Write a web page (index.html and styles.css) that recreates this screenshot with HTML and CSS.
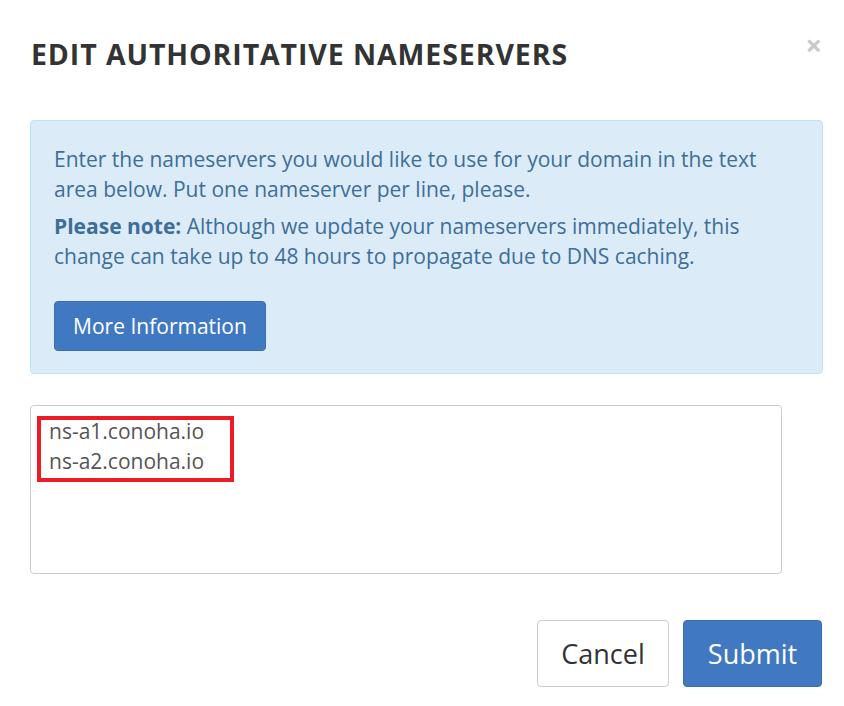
FILE: index.html
```html
<!DOCTYPE html>
<html>
<head>
<meta charset="utf-8">
<link rel="stylesheet" href="styles.css">
</head>
<body>
<div class="modal">
  <div class="modal-header">
    <h1 class="title">EDIT AUTHORITATIVE NAMESERVERS</h1>
    <span class="close">&times;</span>
  </div>
  <div class="alert">
    <p>Enter the nameservers you would like to use for your domain in the text area below. Put one nameserver per line, please.</p>
    <p><strong>Please note:</strong> Although we update your nameservers immediately, this change can take up to 48 hours to propagate due to DNS caching.</p>
    <a class="btn btn-primary btn-info">More Information</a>
  </div>
  <div class="textarea-wrap">
    <div class="textarea">ns-a1.conoha.io<br>ns-a2.conoha.io</div>
    <div class="highlight"></div>
  </div>
  <div class="footer">
    <a class="btn btn-default btn-lg">Cancel</a>
    <a class="btn btn-primary btn-lg">Submit</a>
  </div>
</div>
</body>
</html>
```
FILE: styles.css
```css
html, body {
  margin: 0;
  padding: 0;
  background: #fff;
}
body {
  font-family: "Open Sans", "Liberation Sans", sans-serif;
  color: #333;
}
.modal {
  width: 844px;
  height: 706px;
  box-sizing: border-box;
  padding: 0 22px 0 30px;
}
.modal-header {
  position: relative;
  padding-top: 34px;
  height: 87px;
  box-sizing: border-box;
}
.title {
  margin: 0;
  font-size: 28.5px;
  letter-spacing: 0.9px;
  font-weight: 700;
  line-height: 40px;
  color: #333;
  padding-left: 1px;
}
.close {
  position: absolute;
  right: 0;
  top: 30px;
  font-size: 29px;
  font-weight: 700;
  color: #c9c9c9;
  line-height: 30px;
}
.alert {
  margin-top: 33px;
  margin-right: -1px;
  background: #dcebf8;
  border: 1px solid #bfe2f3;
  border-radius: 4px;
  padding: 24px 23px 22px 23px;
  color: #3c6f98;
  font-size: 21px;
  line-height: 29.5px;
  height: 254px;
  box-sizing: border-box;
}
.alert p {
  margin: 0 0 8px 0;
}
.alert strong {
  font-weight: 700;
}
.btn {
  display: inline-block;
  box-sizing: border-box;
  border: 1px solid transparent;
  border-radius: 4px;
  text-align: center;
  cursor: pointer;
}
.btn-primary {
  background: #4079c1;
  border-color: #3a6fb2;
  color: #fff;
}
.btn-info {
  margin-top: 22px;
  font-size: 21px;
  line-height: 30px;
  padding: 9px 0;
  width: 212px;
}
.textarea-wrap {
  position: relative;
  margin-top: 31px;
}
.textarea {
  width: 752px;
  height: 169px;
  box-sizing: border-box;
  border: 1px solid #cccccc;
  border-radius: 4px;
  padding: 10px 18px;
  font-size: 21px;
  line-height: 30px;
  color: #555;
}
.highlight {
  position: absolute;
  left: 7px;
  top: 11px;
  width: 197px;
  height: 66px;
  box-sizing: border-box;
  border: 4px solid #ed1c24;
}
.footer {
  display: flex;
  justify-content: flex-end;
  gap: 14px;
  margin-top: 46px;
}
.btn-lg {
  font-size: 27px;
  line-height: 40px;
  padding: 13px 0;
  height: 67px;
}
.btn-default {
  background: #fff;
  border-color: #cccccc;
  color: #333;
  width: 132px;
}
.footer .btn-primary {
  width: 139px;
}
```
